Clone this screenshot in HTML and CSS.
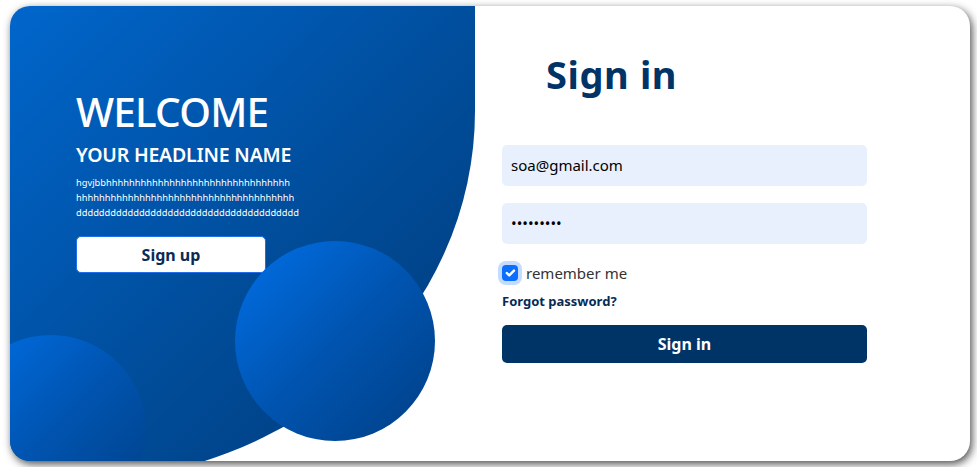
FILE: index.html
```html
<!DOCTYPE html>
<html lang="en">
<head>
<meta charset="utf-8">
<title>Sign in</title>
<link rel="stylesheet" href="styles.css">
</head>
<body>
<main class="card">
  <section class="hero">
    <h1 class="hero-title">WELCOME</h1>
    <h2 class="hero-sub">YOUR HEADLINE NAME</h2>
    <p class="hero-text">hgvjbbhhhhhhhhhhhhhhhhhhhhhhhhhhhhhhhh<br>hhhhhhhhhhhhhhhhhhhhhhhhhhhhhhhhhhhhhh<br>ddddddddddddddddddddddddddddddddddddddd</p>
    <button class="btn-outline" type="button">Sign up</button>
  </section>
  <span class="bubble bubble-big"></span>
  <span class="bubble bubble-small"></span>
  <section class="panel">
    <h2 class="panel-title">Sign in</h2>
    <form class="form">
      <input class="field" type="email" value="soa@gmail.com">
      <input class="field" type="password" value="123456789">
      <label class="check">
        <span class="check-box"><svg viewBox="0 0 20 20" width="16" height="16"><path d="M6 10l3 3l6-6" fill="none" stroke="#fff" stroke-width="3" stroke-linecap="round" stroke-linejoin="round"/></svg></span>
        <span class="check-label">remember me</span>
      </label>
      <a class="forgot" href="#">Forgot password?</a>
      <button class="btn-primary" type="submit">Sign in</button>
    </form>
  </section>
</main>
</body>
</html>
```

FILE: styles.css
```css
* { box-sizing: border-box; }

html, body {
  margin: 0;
  background: #ffffff;
}

body {
  padding: 6px 10px;
  font-family: "Noto Sans", "Open Sans", sans-serif;
}

.card {
  position: relative;
  display: flex;
  align-items: flex-start;
  width: 960px;
  height: 455px;
  border-radius: 20px;
  overflow: hidden;
  background: #ffffff;
  box-shadow: 2px 3px 8px rgba(0, 0, 0, 0.7);
}

.hero {
  flex: none;
  width: 465px;
  height: 475px;
  padding: 81.5px 0 0 66px;
  background: linear-gradient(135deg, #0066cc 0%, #004c99 55%, #003a78 100%);
  border-bottom-right-radius: 400px 370px;
  color: #ffffff;
}

.hero-title {
  margin: 0;
  font-size: 40.5px;
  line-height: 48px;
  font-weight: 500;
  letter-spacing: -0.8px;
}

.hero-sub {
  margin: 7.5px 0 0;
  font-size: 19.5px;
  line-height: 24px;
  font-weight: 600;
  letter-spacing: -0.2px;
}

.hero-text {
  margin: 7.8px 0 0;
  font-size: 9.3px;
  line-height: 15px;
}

.btn-outline {
  display: block;
  margin-top: 16.4px;
  width: 190px;
  height: 37px;
  border: 1px solid #1f6feb;
  border-radius: 5px;
  background: #ffffff;
  color: #0b2a55;
  font-family: inherit;
  font-size: 16px;
  font-weight: 700;
}

.bubble {
  position: absolute;
  border-radius: 50%;
  background: linear-gradient(135deg, #0070e8 0%, #0054b0 50%, #003f85 100%);
}

.bubble-big {
  left: 225px;
  top: 235px;
  width: 200px;
  height: 200px;
}

.bubble-small {
  left: -54px;
  top: 329px;
  width: 190px;
  height: 190px;
}

.panel {
  flex: 1;
  padding: 45.8px 0 0 27px;
}

.panel-title {
  margin: 0 0 0 44px;
  font-size: 38px;
  line-height: 44px;
  font-weight: 700;
  letter-spacing: 0.6px;
  color: #003366;
}

.form {
  display: flex;
  flex-direction: column;
  width: 365px;
  margin-top: 49.2px;
}

.field {
  height: 41px;
  margin: 0 0 17px;
  padding: 0 9px;
  border: none;
  border-radius: 5px;
  background: #e8f0fe;
  color: #000000;
  font-family: inherit;
  font-size: 15px;
  outline: none;
}

.field + .field { margin-bottom: 0; }

.check {
  display: flex;
  align-items: center;
  gap: 8px;
  height: 24px;
  margin-top: 17px;
  color: #333333;
  font-size: 15px;
}

.check-box {
  display: flex;
  width: 16px;
  height: 16px;
  border-radius: 4px;
  background: #0d6efd;
  box-shadow: 0 0 0 4px rgba(13, 110, 253, 0.25);
}

.forgot {
  align-self: flex-start;
  margin-top: 7.4px;
  font-size: 13px;
  line-height: 18px;
  font-weight: 700;
  color: #062b57;
  text-decoration: none;
}

.btn-primary {
  margin-top: 14.3px;
  height: 38px;
  border: none;
  border-radius: 5px;
  background: #003366;
  color: #ffffff;
  font-family: inherit;
  font-size: 16px;
  font-weight: 700;
}
```
